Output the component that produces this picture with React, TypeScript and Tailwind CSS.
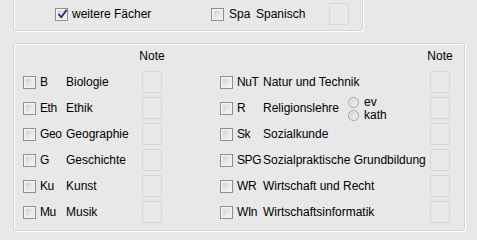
import React from "react";

const font = { fontFamily: '"Liberation Sans", Arial, sans-serif' };

function Check({ checked = false }: { checked?: boolean }) {
  return (
    <div className="relative w-[13px] h-[13px] shrink-0 border border-[#8e8f8f] bg-[#f4f4f4] p-[1px]">
      <div className="w-full h-full bg-gradient-to-br from-[#d2d2d2] to-[#f6f6f6] border border-[#e9e9e9]" />
      {checked && (
        <svg className="absolute left-[1px] top-[0px]" width="11" height="11" viewBox="0 0 11 11">
          <path d="M2 5.5 L4.3 8.3 L9.2 1.5" fill="none" stroke="#1f2a7a" strokeWidth="1.8" strokeLinecap="round" strokeLinejoin="round" />
        </svg>
      )}
    </div>
  );
}

function Radio() {
  return (
    <div className="w-[11px] h-[11px] shrink-0 rounded-full border border-[#a3a3a3] bg-gradient-to-br from-[#cfcfcf] to-[#f5f5f5] shadow-[inset_0_0_0_1px_#ededed]" />
  );
}

function NoteBox() {
  return <div className="w-[20px] h-[22px] shrink-0 border border-[#d7d7d7] bg-[#e9e9e9] rounded-[1px]" />;
}

type Row = { a: string; n: string; radio?: boolean };

const left: Row[] = [
  { a: "B", n: "Biologie" },
  { a: "Eth", n: "Ethik" },
  { a: "Geo", n: "Geographie" },
  { a: "G", n: "Geschichte" },
  { a: "Ku", n: "Kunst" },
  { a: "Mu", n: "Musik" },
];

const right: Row[] = [
  { a: "NuT", n: "Natur und Technik" },
  { a: "R", n: "Religionslehre", radio: true },
  { a: "Sk", n: "Sozialkunde" },
  { a: "SPG", n: "Sozialpraktische Grundbildung" },
  { a: "WR", n: "Wirtschaft und Recht" },
  { a: "WIn", n: "Wirtschaftsinformatik" },
];

function Column({ rows, nameW }: { rows: Row[]; nameW: string }) {
  return (
    <div className="flex flex-col">
      <div className="h-[15px] flex justify-end">
        <div className="w-[20px] flex justify-center whitespace-nowrap leading-[15px]">Note</div>
      </div>
      <div className="mt-[5px] flex flex-col">
        {rows.map((r) => (
          <div key={r.a} className="h-[26px] flex items-center">
            <Check />
            <div className="ml-[4px] w-[26px] whitespace-nowrap tracking-[-0.4px]">{r.a}</div>
            <div className={`${nameW} flex items-center whitespace-nowrap`}>
              <span>{r.n}</span>
              {r.radio && (
                <div className="ml-[9px] flex flex-col leading-[13px] mt-[1px]">
                  <div className="flex items-center gap-[5px] h-[13px]">
                    <Radio />
                    <span className="leading-[13px]">ev</span>
                  </div>
                  <div className="flex items-center gap-[5px] h-[13px]">
                    <Radio />
                    <span className="leading-[13px]">kath</span>
                  </div>
                </div>
              )}
            </div>
            <NoteBox />
          </div>
        ))}
      </div>
    </div>
  );
}

export default function App() {
  return (
    <div
      className="w-[477px] h-[240px] overflow-hidden bg-[#e8e8e8] text-[12px] text-black"
      style={font}
    >
      <div className="ml-[13px] mt-[-11px] w-[350px] h-[42px] rounded-[3px] border border-[#d0d5d9] shadow-[inset_1px_1px_0_#ffffff,1px_1px_0_#ffffff] flex items-end pb-[5px] pl-[41px]">
        <div className="flex items-center h-[22px]">
          <div className="w-[156px] flex items-center">
            <Check checked />
            <span className="ml-[4px] whitespace-nowrap">weitere Fächer</span>
          </div>
          <Check />
          <span className="ml-[5px] w-[27px] whitespace-nowrap">Spa</span>
          <span className="w-[73px] whitespace-nowrap">Spanisch</span>
          <NoteBox />
        </div>
      </div>

      <div className="ml-[13px] mt-[12px] w-[452px] h-[188px] rounded-[3px] border border-[#d0d5d9] shadow-[inset_1px_1px_0_#ffffff,1px_1px_0_#ffffff] pt-[5px] pl-[9px] flex gap-[58px]">
        <Column rows={left} nameW="w-[76px]" />
        <Column rows={right} nameW="w-[167px]" />
      </div>
    </div>
  );
}
